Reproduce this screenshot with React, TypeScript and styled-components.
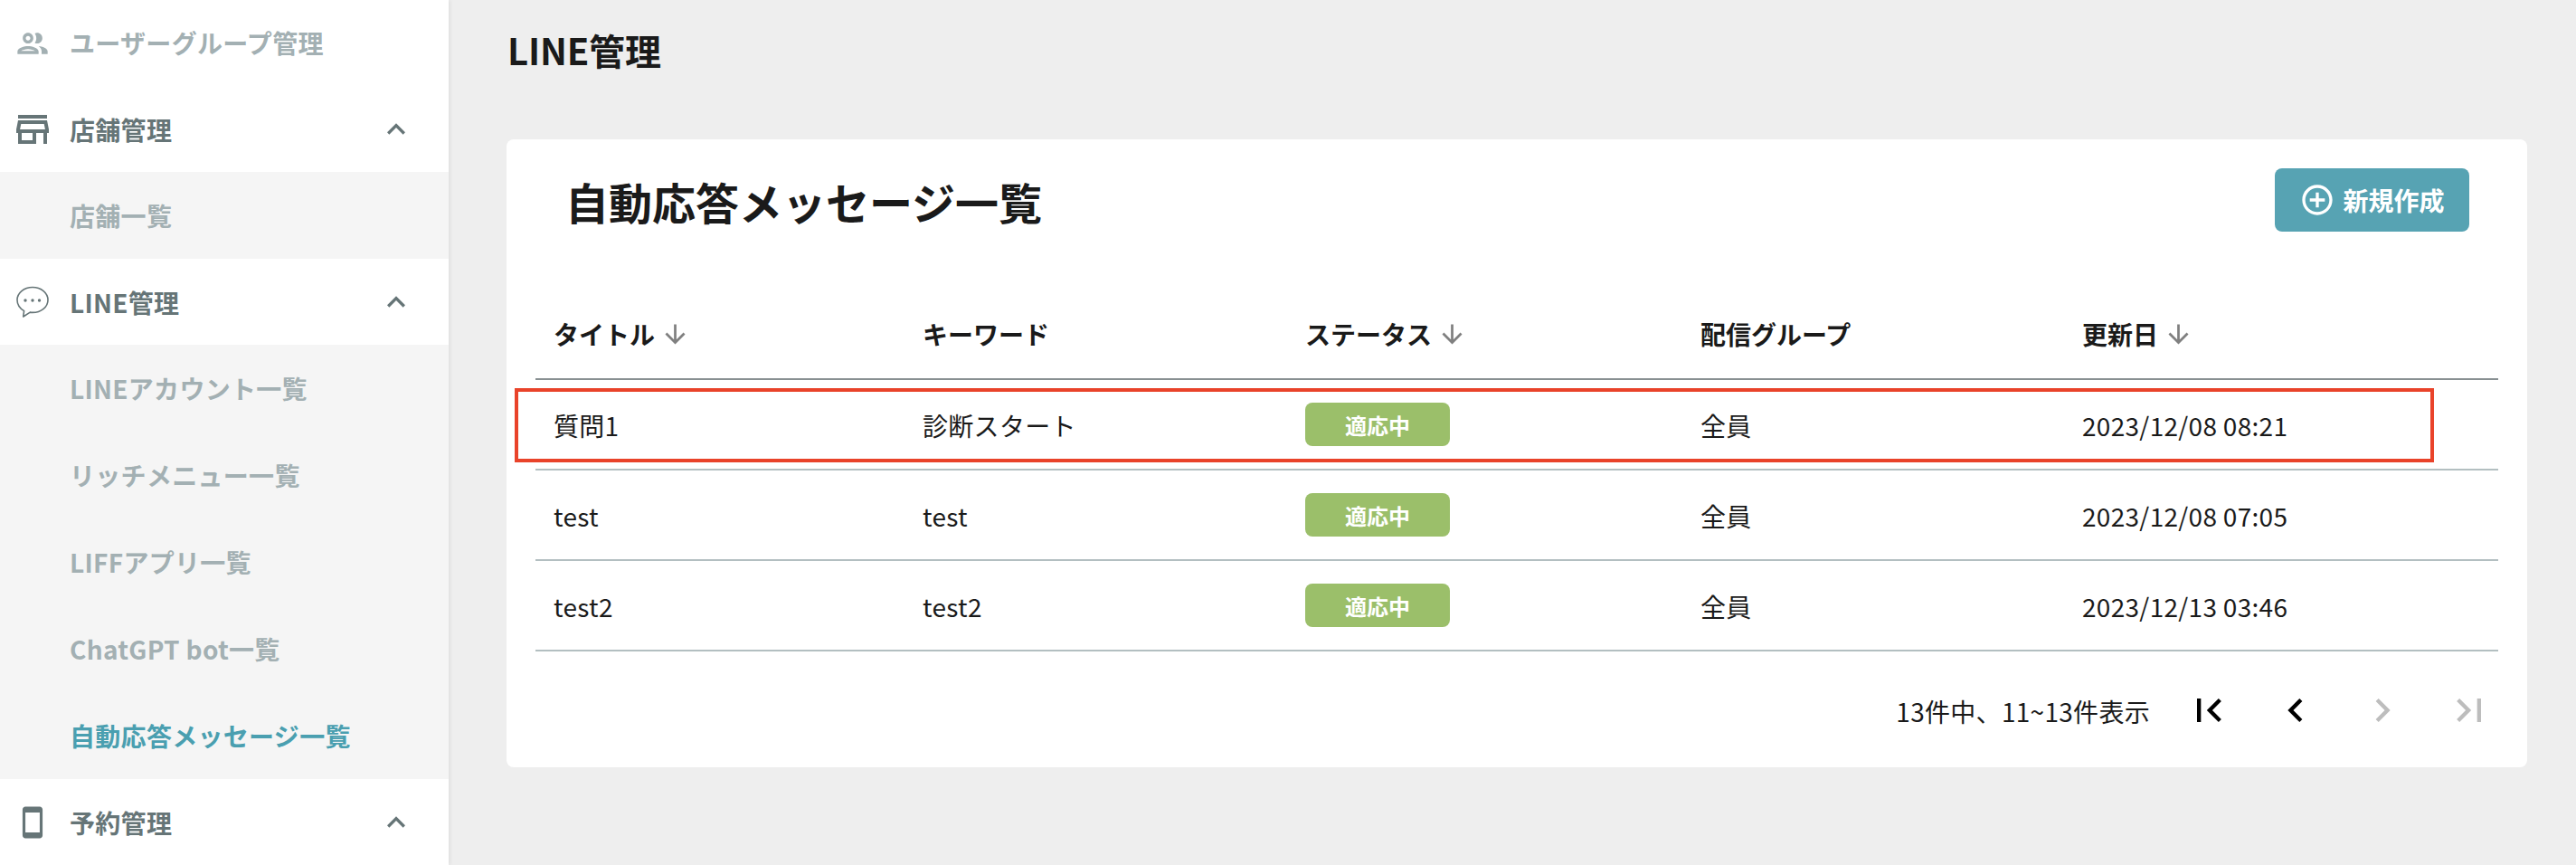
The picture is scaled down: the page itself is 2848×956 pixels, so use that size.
import React from "react";
import styled, { createGlobalStyle } from "styled-components";
import {
  MdOutlinePeople,
  MdOutlineStore,
  MdSmartphone,
  MdExpandLess,
  MdOutlineAddCircleOutline,
  MdArrowDownward,
  MdFirstPage,
  MdLastPage,
  MdChevronLeft,
  MdChevronRight,
} from "react-icons/md";

const GlobalStyle = createGlobalStyle`
  html, body {
    margin: 0;
    padding: 0;
    background: #eeeeee;
    font-family: "Noto Sans CJK JP", "Noto Sans", sans-serif;
    color: #1a1a1a;
  }
`;

const Page = styled.div`
  display: flex;
  width: 2848px;
  height: 956px;
  overflow: hidden;
`;

/* sidebar */
const Sidebar = styled.nav`
  flex: none;
  width: 496px;
  height: 956px;
  background: #fff;
  box-shadow: 2px 0 4px rgba(0, 0, 0, 0.06);
  display: flex;
  flex-direction: column;
  letter-spacing: 0.3px;
`;

const GroupRow = styled.div<{ $muted?: boolean }>`
  flex: none;
  height: 95px;
  box-sizing: border-box;
  position: relative;
  display: flex;
  align-items: center;
  padding-left: 77px;
  font-size: 28px;
  font-weight: 700;
  color: ${(p) => (p.$muted ? "#a3b0b3" : "#667577")};
  background: #fff;
`;

const TopRow = styled(GroupRow)`
  padding-bottom: 2px;
`;

const GroupIcon = styled.span`
  position: absolute;
  left: 0;
  top: 0;
  width: 72px;
  height: 100%;
  display: flex;
  align-items: center;
  justify-content: center;
  svg {
    display: block;
  }
`;

const Chevron = styled(MdExpandLess)`
  position: absolute;
  left: 418px;
  top: 28px;
  font-size: 40px;
`;

const SubRow = styled.div<{ $active?: boolean }>`
  flex: none;
  height: 96px;
  display: flex;
  align-items: center;
  padding-left: 77px;
  font-size: 28px;
  font-weight: 700;
  background: #f5f5f5;
  color: ${(p) => (p.$active ? "#4a9fb0" : "#a3b0b3")};
`;

/* main area */
const Main = styled.main`
  flex: 1;
  padding: 0 54px 0 64px;
`;

const PageTitle = styled.h1`
  margin: 0;
  height: 154px;
  padding: 30px 0 0 1px;
  box-sizing: border-box;
  font-size: 40px;
  line-height: 50px;
  font-weight: 700;
  letter-spacing: -0.2px;
`;

const Card = styled.section`
  background: #fff;
  border-radius: 8px;
  height: 694px;
  padding: 32px 32px 0;
  box-sizing: border-box;
`;

const CardHeader = styled.div`
  display: flex;
  justify-content: space-between;
  align-items: flex-start;
  padding: 0 32px 0 33px;
  height: 134px;
`;

const CardTitle = styled.h2`
  margin: 0;
  font-size: 48px;
  line-height: 72px;
  font-weight: 700;
`;

const CreateButton = styled.button`
  width: 215px;
  height: 70px;
  border: 0;
  border-radius: 8px;
  background: #57a3b3;
  color: #fff;
  font-family: inherit;
  font-size: 28px;
  font-weight: 700;
  display: flex;
  align-items: center;
  justify-content: center;
  gap: 8px;
  padding: 0;
`;

const Grid = styled.div<{ $head?: boolean }>`
  display: grid;
  grid-template-columns: 408px 423px 437px 422px 1fr;
  align-items: center;
  height: 98px;
  border-bottom: 2px solid ${(p) => (p.$head ? "#889092" : "#b3bfc1")};
  font-size: 28px;
  font-weight: ${(p) => (p.$head ? 700 : 400)};
  letter-spacing: ${(p) => (p.$head ? "0" : "0.3px")};
`;

const Cell = styled.div`
  padding: 0 0 0 20px;
  display: flex;
  align-items: center;
`;

const TextCell = styled(Cell)`
  padding-top: 1px;
`;

const SortIcon = styled(MdArrowDownward)`
  font-size: 33px;
  color: #808080;
  margin-left: 6px;
`;

const Badge = styled.span`
  width: 160px;
  height: 48px;
  border-radius: 8px;
  background: #9bbf6a;
  color: #fff;
  font-size: 24px;
  font-weight: 700;
  letter-spacing: 0;
  display: flex;
  align-items: center;
  justify-content: center;
`;

const Body = styled.div`
  position: relative;
`;

const Highlight = styled.div`
  position: absolute;
  left: -23px;
  top: 9px;
  width: 2122px;
  height: 82px;
  box-sizing: border-box;
  border: 4px solid #e9432a;
`;

const Pagination = styled.div`
  display: flex;
  align-items: center;
  justify-content: flex-end;
  height: 96px;
  margin: 17px -16px 0 0;
  font-size: 28px;
  letter-spacing: 0.3px;
`;

const PageInfo = styled.span`
  margin: 2px 17px 0 0;
`;

const PageButton = styled.span<{ $disabled?: boolean }>`
  width: 96px;
  height: 96px;
  display: flex;
  align-items: center;
  justify-content: center;
  font-size: 52px;
  color: ${(p) => (p.$disabled ? "#bdbdbd" : "#000")};
`;

const ChatIcon = () => (
  <svg width="38" height="36" viewBox="0 0 38 36" fill="none" stroke="currentColor" strokeWidth="1.6">
    <path d="M19 1.5C9.6 1.5 2 7.6 2 15.4c0 5.6 3.6 9.7 7.6 12.2l-.9 6.4 7.6-4.9c1 .2 1.8.3 2.7.3 9.4 0 17-6.2 17-14S28.4 1.5 19 1.5z" strokeLinejoin="round" />
    <circle cx="11" cy="16" r="1.7" fill="currentColor" stroke="none" />
    <circle cx="19" cy="16" r="1.7" fill="currentColor" stroke="none" />
    <circle cx="26.5" cy="16" r="1.7" fill="currentColor" stroke="none" />
  </svg>
);

const rows = [
  { title: "質問1", keyword: "診断スタート", date: "2023/12/08 08:21" },
  { title: "test", keyword: "test", date: "2023/12/08 07:05" },
  { title: "test2", keyword: "test2", date: "2023/12/13 03:46" },
];

export default function App() {
  return (
    <>
      <GlobalStyle />
      <Page>
        <Sidebar>
          <TopRow $muted>
            <GroupIcon>
              <MdOutlinePeople size={40} />
            </GroupIcon>
            ユーザーグループ管理
          </TopRow>
          <GroupRow>
            <GroupIcon>
              <MdOutlineStore size={48} />
            </GroupIcon>
            店舗管理
            <Chevron />
          </GroupRow>
          <SubRow>店舗一覧</SubRow>
          <GroupRow>
            <GroupIcon>
              <ChatIcon />
            </GroupIcon>
            LINE管理
            <Chevron />
          </GroupRow>
          <SubRow>LINEアカウント一覧</SubRow>
          <SubRow>リッチメニュー一覧</SubRow>
          <SubRow>LIFFアプリ一覧</SubRow>
          <SubRow>ChatGPT bot一覧</SubRow>
          <SubRow $active>自動応答メッセージ一覧</SubRow>
          <GroupRow>
            <GroupIcon>
              <MdSmartphone size={38} />
            </GroupIcon>
            予約管理
            <Chevron />
          </GroupRow>
        </Sidebar>
        <Main>
          <PageTitle>LINE管理</PageTitle>
          <Card>
            <CardHeader>
              <CardTitle>自動応答メッセージ一覧</CardTitle>
              <CreateButton>
                <MdOutlineAddCircleOutline size={40} />
                新規作成
              </CreateButton>
            </CardHeader>
            <Grid $head>
              <Cell>
                タイトル
                <SortIcon />
              </Cell>
              <Cell>キーワード</Cell>
              <Cell>
                ステータス
                <SortIcon />
              </Cell>
              <Cell>配信グループ</Cell>
              <Cell>
                更新日
                <SortIcon />
              </Cell>
            </Grid>
            <Body>
              {rows.map((r) => (
                <Grid key={r.title}>
                  <TextCell>{r.title}</TextCell>
                  <TextCell>{r.keyword}</TextCell>
                  <Cell>
                    <Badge>適応中</Badge>
                  </Cell>
                  <TextCell>全員</TextCell>
                  <TextCell>{r.date}</TextCell>
                </Grid>
              ))}
              <Highlight />
            </Body>
            <Pagination>
              <PageInfo>13件中、11~13件表示</PageInfo>
              <PageButton>
                <MdFirstPage />
              </PageButton>
              <PageButton>
                <MdChevronLeft />
              </PageButton>
              <PageButton $disabled>
                <MdChevronRight />
              </PageButton>
              <PageButton $disabled>
                <MdLastPage />
              </PageButton>
            </Pagination>
          </Card>
        </Main>
      </Page>
    </>
  );
}
